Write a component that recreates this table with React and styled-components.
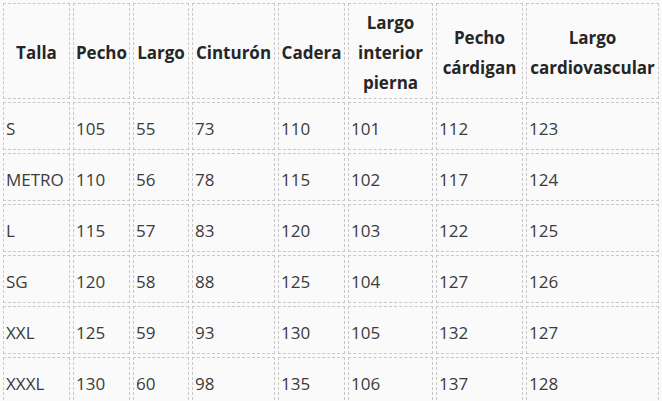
import React from "react";
import styled, { createGlobalStyle } from "styled-components";

const GlobalStyle = createGlobalStyle`
  body {
    margin: 0;
    background: #fafafa;
    font-family: "Open Sans", "Noto Sans", Arial, sans-serif;
  }
`;

const columns = [
  { label: ["Talla"], width: 67 },
  { label: ["Pecho"], width: 57 },
  { label: ["Largo"], width: 56 },
  { label: ["Cinturón"], width: 83 },
  { label: ["Cadera"], width: 67 },
  { label: ["Largo", "interior", "pierna"], width: 85 },
  { label: ["Pecho", "cárdigan"], width: 87 },
  { label: ["Largo", "cardiovascular"], width: 133 },
];

const rows = [
  ["S", 105, 55, 73, 110, 101, 112, 123],
  ["METRO", 110, 56, 78, 115, 102, 117, 124],
  ["L", 115, 57, 83, 120, 103, 122, 125],
  ["SG", 120, 58, 88, 125, 104, 127, 126],
  ["XXL", 125, 59, 93, 130, 105, 132, 127],
  ["XXXL", 130, 60, 98, 135, 106, 137, 128],
];

const SizeChart = () => {
  return (
    <Table>
      <thead>
        <tr>
          {columns.map((col, i) => (
            <Th key={i} $w={col.width}>
              {col.label.map((line, j) => (
                <Line key={j}>{line}</Line>
              ))}
            </Th>
          ))}
        </tr>
      </thead>
      <tbody>
        {rows.map((row) => (
          <tr key={row[0]}>
            {row.map((cell, i) => (
              <Td key={i}>{cell}</Td>
            ))}
          </tr>
        ))}
      </tbody>
    </Table>
  );
};

export default function App() {
  return (
    <>
      <GlobalStyle />
      <SizeChart />
    </>
  );
}

const Table = styled.table`
  border-collapse: separate;
  border-spacing: 3px;
  table-layout: fixed;
  font-size: 17px;
`;
const Th = styled.th`
  box-sizing: border-box;
  width: ${({ $w }) => $w}px;
  height: 94px;
  padding: 4px 0 0;
  border: 1px dashed #c9c9c9;
  background: #fafafa;
  color: #262626;
  font-weight: 700;
  text-align: center;
  vertical-align: middle;
  line-height: 30px;
`;
const Line = styled.span`
  display: block;
  white-space: nowrap;
`;
const Td = styled.td`
  box-sizing: border-box;
  height: 48px;
  padding: 5px 0 0 2px;
  border: 1px dashed #c9c9c9;
  background: #fafafa;
  color: #3b3b3b;
  text-align: left;
  vertical-align: middle;
  line-height: 30px;
  white-space: nowrap;
`;
